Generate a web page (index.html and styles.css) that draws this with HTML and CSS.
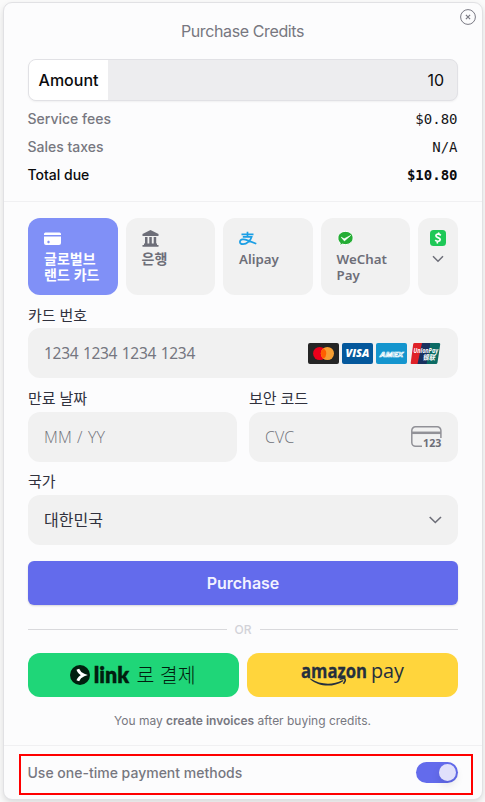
FILE: index.html
```html
<!DOCTYPE html>
<html lang="ko">
<head>
<meta charset="utf-8">
<title>Purchase Credits</title>
<link rel="stylesheet" href="styles.css">
</head>
<body>
<main class="modal">
  <button class="close" aria-label="Close"><svg width="16" height="16" viewBox="0 0 16 16" fill="none" stroke="currentColor"><circle cx="8" cy="8" r="7.4"/><path d="M5.9 5.9l4.2 4.2M10.1 5.9L5.9 10.1" stroke-width="1.2"/></svg></button>
  <section class="summary">
    <h1>Purchase Credits</h1>
    <div class="amount"><span class="amount-label">Amount</span><span class="amount-value">10</span></div>
    <div class="row"><span>Service fees</span><span class="mono">$0.80</span></div>
    <div class="row"><span>Sales taxes</span><span class="mono">N/A</span></div>
    <div class="row total"><span>Total due</span><span class="mono">$10.80</span></div>
  </section>
  <section class="payment">
    <div class="tabs">
      <div class="tab selected">
        <svg width="18" height="16" viewBox="0 0 18 16"><path fill="#fff" d="M2 1.5h13.500a1.500 1.500 0 0 1 1.500 1.500v1H0V3.200A1.700 1.700 0 0 1 2 1.500zM0 5.500h17V12a2 2 0 0 1-2 2H2a2 2 0 0 1-2-2z"/><path d="M3 11h3M4.500 9.700v2.600" stroke="#8090f7" stroke-width="1.200"/></svg>
        <span>글로벌브<br>랜드 카드</span>
      </div>
      <div class="tab">
        <svg width="18" height="18" viewBox="0 0 18 18" fill="#6d6e78"><path d="M8.500 0L16.500 4v2H.500V4zM3 7h2.500v7H3zM7.300 7h2.500v7H7.300zM11.700 7h2.500v7h-2.500zM2 13.500h13V15h1.500v1.700H.500V15H2z"/></svg>
        <span>은행</span>
      </div>
      <div class="tab latin">
        <svg width="18" height="16" viewBox="0 0 18 16" fill="none" stroke="#1c9fe5"><path stroke-width="1.700" d="M2.500 3.300h12M8.500.700v5M3.800 5.900h8.800C11.500 9.500 8 13.200 4 13.200 1.800 13.200.800 12.200.900 10.800 1.200 7.800 5.200 7.900 8 9.100L17.300 12.800"/></svg>
        <span>Alipay</span>
      </div>
      <div class="tab latin">
        <svg width="18" height="18" viewBox="0 0 18 18"><path d="M8.500 1.400c4.500 0 7.600 2.800 7.600 6.500s-3.300 6.700-7.700 6.700c-1 0-2-.2-2.900-.5L2.900 15.700l.3-2.700C1.700 11.800.900 10 .900 8c0-3.800 3.100-6.600 7.600-6.600z" fill="#25ad35" stroke="#fff"/><path d="M4.200 7.200l3 1.600 6.500-3.400-6.300 5.500z" fill="#fff" stroke="#fff" stroke-width=".6"/></svg>
        <span>WeChat<br>Pay</span>
      </div>
      <div class="tab more">
        <svg width="16" height="16" viewBox="0 0 16 16"><rect width="16" height="16" rx="3.500" fill="#1ec857"/><path d="M10.800 5.300C9 3.600 5.900 3.900 5.900 5.800c0 2.200 4.600 1.400 4.300 3.900-.2 1.900-3.200 2.100-5 .4M8.800 2.500l-.3 1.800M7.500 11.500l-.3 2" fill="none" stroke="#fff" stroke-width="1.700"/></svg>
        <svg class="more-arrow" width="12" height="8" viewBox="0 0 12 8" fill="none" stroke="#6d6e78" stroke-width="1.500"><path d="M1 1.300l5 5 5-5"/></svg>
      </div>
    </div>
    <div class="field">
      <label>카드 번호</label>
      <div class="input number"><span>1234 1234 1234 1234</span>
        <div class="brands">
          <svg width="31" height="21" viewBox="0 0 31 21"><rect width="31" height="21" rx="2" fill="#252525"/><circle cx="11.700" cy="10.500" r="6.600" fill="#eb001b"/><circle cx="19.400" cy="10.500" r="6.600" fill="#f79e31"/><path d="M15.550 5.150a6.600 6.600 0 0 1 0 10.700 6.600 6.600 0 0 1 0-10.700z" fill="#ff5f00"/></svg>
          <svg width="31" height="21" viewBox="0 0 31 21"><rect width="31" height="21" rx="2" fill="#04589c"/><text class="visa" x="3.500" y="14.300" textLength="24" lengthAdjust="spacingAndGlyphs">VISA</text></svg>
          <svg width="31" height="21" viewBox="0 0 31 21"><rect width="31" height="21" rx="2" fill="#1495ce"/><text class="amex" x="4" y="13.500" textLength="23" lengthAdjust="spacingAndGlyphs">AMEX</text></svg>
          <svg class="unionpay" width="31" height="21" viewBox="0 0 31 21"><path d="M4.500 0H13L9.500 21H1.500Q.500 21 .700 20L3.200 1Q3.500 0 4.500 0z" fill="#df2128"/><path d="M12 0h9l-4 21H7.500z" fill="#19305f"/><path d="M20.500 0H29q1.500 0 1.200 1.500L27.500 19.500Q27.200 21 26 21H16.500z" fill="#0b6b64"/><text class="union" x="3.500" y="10.200" textLength="24.500" lengthAdjust="spacingAndGlyphs">UnionPay</text><text class="union-cn" x="12.500" y="17" textLength="12.500" lengthAdjust="spacingAndGlyphs">银联</text></svg>
        </div>
      </div>
    </div>
    <div class="pair">
      <div class="field"><label>만료 날짜</label><div class="input thin"><span>MM / YY</span></div></div>
      <div class="field"><label>보안 코드</label><div class="input thin"><span>CVC</span>
        <svg width="31" height="22" viewBox="0 0 31 22"><g fill="none" stroke="#919197"><path stroke-width="1.500" d="M11 20.200H4.500A3.700 3.700 0 0 1 .800 16.500V4.500A3.700 3.700 0 0 1 4.500.800h21.700a3.700 3.700 0 0 1 3.700 3.700V12"/><path stroke-width="2.500" d="M1 6.800h29"/></g><text class="cvc" x="12" y="21" textLength="18.500" lengthAdjust="spacingAndGlyphs">123</text></svg></div></div>
    </div>
    <div class="field country"><label>국가</label><div class="input select"><span>대한민국</span><svg width="13" height="8" viewBox="0 0 13 8" fill="none" stroke="#6d6e78" stroke-width="1.600"><path d="M.700 1l5.600 5.500L12 1"/></svg></div></div>
    <button class="purchase">Purchase</button>
    <div class="or"><span>OR</span></div>
    <div class="wallets">
      <button class="wallet link">
        <svg width="126" height="30" viewBox="0 -3 126 30"><circle cx="10" cy="12" r="10" fill="#011e0f"/><path d="M7.800 6.200c1 2.800 2.900 4.600 6 5.800-3.100 1.200-5 3-6 5.800" fill="none" stroke="#fff" stroke-width="2.900"/><text class="link-word" x="23.700" y="20" textLength="35.500" lengthAdjust="spacingAndGlyphs">link</text><text class="link-ko" x="66.500" y="19.700" textLength="59" lengthAdjust="spacingAndGlyphs">로 결제</text></svg>
      </button>
      <button class="wallet amazon">
        <svg width="104" height="28" viewBox="0 -2 104 28"><text class="amz" x="0" y="14.500" textLength="66" lengthAdjust="spacingAndGlyphs">amazon</text><text class="pay" x="70" y="14.500" textLength="33" lengthAdjust="spacingAndGlyphs">pay</text><path d="M9.500 15.500c10 6.500 22.500 6.600 31.800 1.700q1.600-.3.900 1C31.500 25 17.500 23.600 9.100 16.200q-.5-.7.400-.7z" fill="#252f3e"/><path d="M38.500 16.200c2.700-.8 5-.9 5.500-.3.500.8-.3 3.300-1.600 4.900" fill="none" stroke="#252f3e" stroke-width="1.600"/></svg>
      </button>
    </div>
    <p class="note">You may <strong>create invoices</strong> after buying credits.</p>
  </section>
  <footer class="one-time">
    <span class="one-time-label">Use one-time payment methods</span>
    <span class="toggle" role="switch" aria-checked="true"></span>
    <div class="highlight"></div>
  </footer>
</main>
</body>
</html>
```
FILE: styles.css
```css
* { box-sizing: border-box; }
body {
  margin: 0;
  padding: 2px 2px 3px 3px;
  height: 802px;
  overflow: hidden;
  background: #fafafa;
  font-family: Inter, "Noto Sans CJK KR", sans-serif;
  color: #0b0b0d;
}
button { border: 0; padding: 0; font: inherit; }
svg { display: block; flex: none; }
.modal {
  position: relative;
  width: 480px;
  height: 798px;
  border: 1px solid #e1e1e4;
  border-radius: 9px;
  background: #fcfcfd;
  box-shadow: 0 3px 6px rgba(0, 0, 0, .12);
}
.close { position: absolute; top: 6px; right: 6px; background: none; color: #797983; }
.summary { height: 199px; padding: 17px 24px 0; border-bottom: 1px solid #f0f0f2; }
h1 {
  margin: 0 0 17px;
  font-size: 16px;
  line-height: 22px;
  font-weight: 400;
  letter-spacing: -.38px;
  text-align: center;
  text-indent: -1px;
  color: #777780;
}
.amount {
  display: flex;
  justify-content: space-between;
  align-items: stretch;
  height: 42px;
  margin-bottom: 4px;
  border: 1px solid #e1e1e5;
  border-radius: 8px;
  overflow: hidden;
  background: #ededef;
  font-size: 16px;
  line-height: 41px;
  box-shadow: 0 1px 2px rgba(0, 0, 0, .05);
}
.amount-label { width: 79px; background: #fff; text-align: center; font-weight: 500; }
.amount-value { padding-right: 13px; }
.row {
  display: flex;
  justify-content: space-between;
  height: 28px;
  line-height: 28px;
  font-size: 14px;
  font-weight: 500;
  color: #777780;
}
.row span:first-child { margin-left: -.5px; }
.mono { margin-right: .5px; font-family: "DejaVu Sans Mono", monospace; font-size: 14px; font-weight: 400; color: #161618; }
.total { color: #0b0b0d; }
.total .mono { font-weight: 700; color: #0b0b0d; }

.payment { height: 544px; padding: 16px 24px 0; border-bottom: 1px solid #f0f0f2; }
.tabs { display: flex; gap: 8px; margin-bottom: 12px; }
.tab {
  flex: 1;
  height: 77px;
  padding: 12px 0 0 16px;
  border-radius: 12px;
  background: #f1f1f1;
  color: #6d6e78;
  font: 700 14px/16px "Noto Sans CJK KR", sans-serif;
  white-space: nowrap;
}
.tab svg { height: 18px; }
.tab span { display: block; margin-top: 2px; }
.selected { background: #8090f7; color: #fff; }
.latin { font-family: "Noto Sans", sans-serif; font-weight: 600; font-size: 13.300px; }
.tab.latin span { margin-top: 3px; }
.more { flex: 0 0 40px; padding-left: 12px; }
.more svg { height: 16px; }
.tab .more-arrow { height: 8px; margin: 9px 0 0 2px; }
.field { flex: 1; margin-bottom: 12px; font-family: "Noto Sans", "Noto Sans CJK KR", sans-serif; }
.field label { display: block; height: 21px; line-height: 16px; font-size: 15px; color: #30313d; }
.pair label, .country label { height: 22px; margin-top: -1px; }
.field .input {
  display: flex;
  justify-content: space-between;
  align-items: center;
  height: 50px;
  padding: 0 16px;
  border-radius: 12px;
  background: #f1f1f1;
  color: #757680;
  font-size: 16px;
}
.number span { font-size: 15.500px; letter-spacing: -.3px; word-spacing: .9px; }
.field .thin { font-family: "Open Sans", sans-serif; font-size: 16px; font-weight: 350; letter-spacing: .1px; word-spacing: 1px; color: #70717a; }
.brands { display: flex; gap: 3px; margin-right: 1px; }
.pair { display: flex; gap: 12px; padding-top: 1px; }
.country { margin-bottom: 16px; }
.field .select { color: #30313d; font-size: 16px; }
.select span { margin-top: -2px; }
.visa { font: italic 800 11px "Open Sans", sans-serif; fill: #fff; }
.amex { font: italic 700 7.500px "Open Sans", sans-serif; fill: #1495ce; stroke: #fff; stroke-width: .7px; }
.union { font: italic 700 6.500px "Open Sans", sans-serif; fill: #fff; }
.union-cn { font: italic 700 7px "Noto Sans CJK SC", sans-serif; fill: #fff; }
.cvc { font: 700 10.500px "Noto Sans", sans-serif; fill: #6d6e78; }
.purchase {
  display: block;
  width: 100%;
  height: 44px;
  border-radius: 6px;
  background: #636bec;
  color: #f2f2ff;
  font-size: 16px;
  font-weight: 600;
  box-shadow: 0 1px 2px rgba(0, 0, 0, .15);
}
.or {
  display: flex;
  align-items: center;
  gap: 8px;
  height: 48px;
  font-size: 12px;
  font-weight: 500;
  color: #d2d2d8;
}
.or::before, .or::after { content: ""; flex: 1; height: 1px; background: #d9d9dc; }
.wallets { display: flex; gap: 8px; }
.wallet { display: flex; flex: 1; align-items: center; justify-content: center; height: 44px; border-radius: 12px; }
.link { background: #1fd678; }
.link svg { margin-right: 1px; }
.amazon { background: #ffd53c; }
.link-word { font: 800 23px Lato, sans-serif; fill: #011e0f; stroke: #011e0f; stroke-width: .3px; }
.link-ko { font: 300 20px "Noto Sans CJK KR", sans-serif; fill: #011e0f; }
.amz { font: 700 20px "Open Sans", sans-serif; fill: #252f3e; stroke: #252f3e; stroke-width: .3px; }
.pay { font: 400 20px "Open Sans", sans-serif; fill: #252f3e; }
.note { margin: 14px 1px 0 0; text-align: center; font-size: 12px; line-height: 20px; color: #777780; }
.note strong { font-weight: 600; }
.one-time {
  position: relative;
  display: flex;
  align-items: center;
  justify-content: space-between;
  height: 53px;
  padding: 0 24px;
  font-size: 14px;
  font-weight: 500;
  color: #777780;
}
.one-time-label { margin-left: -.5px; }
.toggle { width: 42px; height: 21px; padding: 2px; border-radius: 11px; background: #636bec; }
.toggle::after {
  content: "";
  display: block;
  width: 17px;
  height: 17px;
  margin-left: auto;
  border-radius: 50%;
  background: #e0e0fb;
  box-shadow: 0 4px 8px rgba(0, 0, 0, .1);
}
.highlight { position: absolute; left: 15px; top: 8px; width: 454px; height: 41px; border: 2px solid #ff0000; }
```
